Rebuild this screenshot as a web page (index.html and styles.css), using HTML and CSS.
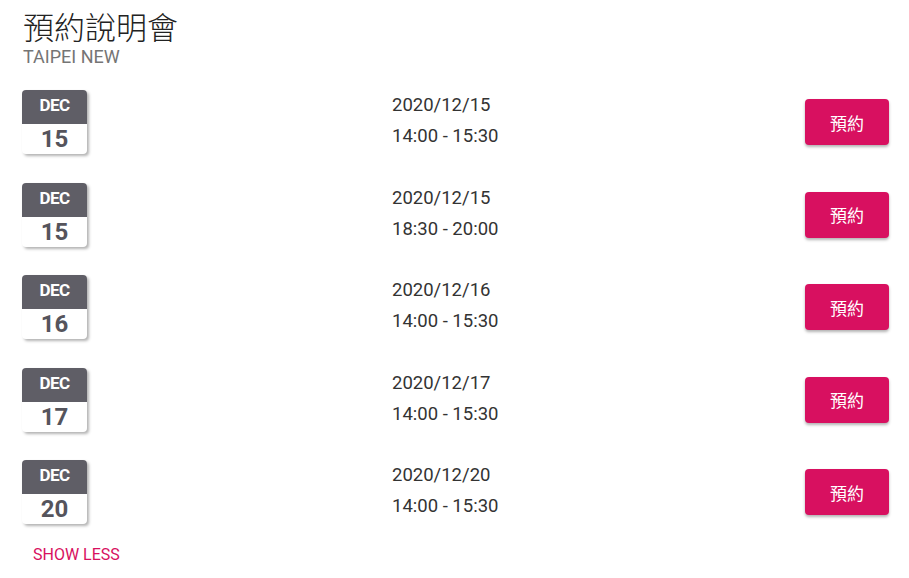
FILE: index.html
```html
<!DOCTYPE html>
<html lang="zh-Hant">
<head>
<meta charset="utf-8">
<link rel="stylesheet" href="styles.css">
</head>
<body>
<div class="page">
  <h1 class="title">預約說明會</h1>
  <div class="subtitle">TAIPEI NEW</div>
  <ul class="list">
    <li class="row">
      <div class="cal"><div class="cal-mon">DEC</div><div class="cal-day">15</div></div>
      <div class="when"><div>2020/12/15</div><div>14:00 - 15:30</div></div>
      <button class="btn">預約</button>
    </li>
    <li class="row">
      <div class="cal"><div class="cal-mon">DEC</div><div class="cal-day">15</div></div>
      <div class="when"><div>2020/12/15</div><div>18:30 - 20:00</div></div>
      <button class="btn">預約</button>
    </li>
    <li class="row">
      <div class="cal"><div class="cal-mon">DEC</div><div class="cal-day">16</div></div>
      <div class="when"><div>2020/12/16</div><div>14:00 - 15:30</div></div>
      <button class="btn">預約</button>
    </li>
    <li class="row">
      <div class="cal"><div class="cal-mon">DEC</div><div class="cal-day">17</div></div>
      <div class="when"><div>2020/12/17</div><div>14:00 - 15:30</div></div>
      <button class="btn">預約</button>
    </li>
    <li class="row">
      <div class="cal"><div class="cal-mon">DEC</div><div class="cal-day">20</div></div>
      <div class="when"><div>2020/12/20</div><div>14:00 - 15:30</div></div>
      <button class="btn">預約</button>
    </li>
  </ul>
  <div class="more">SHOW LESS</div>
</div>
</body>
</html>
```
FILE: styles.css
```css
html, body {
  margin: 0;
  padding: 0;
  background: #fff;
}
body {
  font-family: Roboto, "Noto Sans CJK TC", sans-serif;
  color: #333;
}
.page {
  padding: 6px 20px 0 22px;
}
.title {
  margin: 0 0 0 1px;
  font-family: "Noto Sans CJK TC", sans-serif;
  font-size: 31px;
  font-weight: 300;
  line-height: 40px;
  color: #222;
}
.subtitle {
  margin-left: 1px;
  font-size: 18px;
  line-height: 22px;
  color: #757575;
}
.list {
  list-style: none;
  margin: 22px 0 0;
  padding: 0;
}
.row {
  display: flex;
  align-items: flex-start;
  height: 92.5px;
}
.cal {
  width: 65px;
  height: 64px;
  border-radius: 4px;
  overflow: hidden;
  background: #fff;
  box-shadow: 2px 2px 3px rgba(0,0,0,0.3);
  display: flex;
  flex-direction: column;
}
.cal-mon {
  height: 34px;
  background: #5f5e66;
  color: #fff;
  font-weight: 700;
  font-size: 17px;
  line-height: 30px;
  text-align: center;
  letter-spacing: -0.5px;
}
.cal-day {
  flex: 1;
  color: #55545c;
  font-weight: 700;
  font-size: 24px;
  line-height: 30px;
  text-align: center;
}
.when {
  margin-left: 305px;
  flex: 1;
  font-size: 18.5px;
  line-height: 31px;
  color: #333;
}
.btn {
  margin-top: 9px;
  width: 84px;
  height: 46px;
  border: none;
  border-radius: 4px;
  background: #d81060;
  color: #fff;
  font-family: Roboto, "Noto Sans CJK TC", sans-serif;
  font-size: 17px;
  box-shadow: 0 2px 3px rgba(0,0,0,0.3);
}
.more {
  margin: -8px 0 0 11px;
  color: #d81060;
  font-size: 16px;
  line-height: 20px;
}
```
